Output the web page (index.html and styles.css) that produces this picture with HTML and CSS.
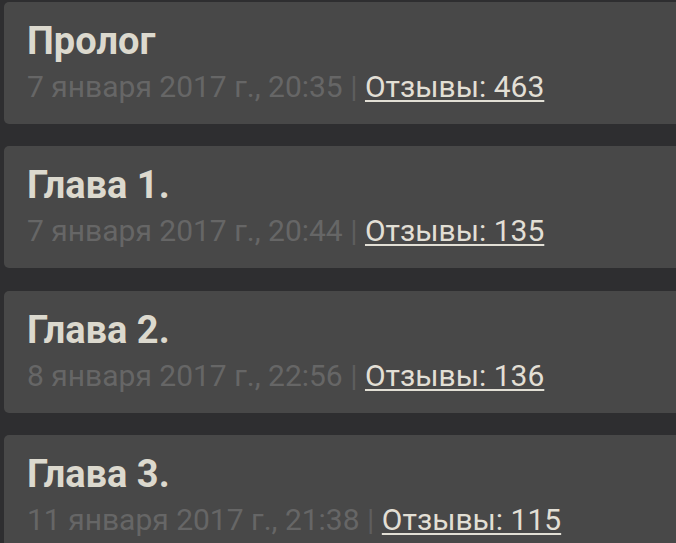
FILE: index.html
```html
<!DOCTYPE html>
<html lang="ru">
<head>
    <meta charset="UTF-8">
    <meta name="viewport" content="width=device-width, initial-scale=1.0">
    <title>Оглавление</title>
    <link rel="stylesheet" href="styles.css">
</head>
<body>
    <div class="chapters">
        <div class="chapter">
            <h2>Пролог</h2>
            <p class="meta">7 января 2017 г., 20:35 <span class="sep">|</span> <a href="#">Отзывы: 463</a></p>
        </div>
        <div class="chapter">
            <h2>Глава 1.</h2>
            <p class="meta">7 января 2017 г., 20:44 <span class="sep">|</span> <a href="#">Отзывы: 135</a></p>
        </div>
        <div class="chapter">
            <h2>Глава 2.</h2>
            <p class="meta">8 января 2017 г., 22:56 <span class="sep">|</span> <a href="#">Отзывы: 136</a></p>
        </div>
        <div class="chapter">
            <h2>Глава 3.</h2>
            <p class="meta">11 января 2017 г., 21:38 <span class="sep">|</span> <a href="#">Отзывы: 115</a></p>
        </div>
    </div>
</body>
</html>
```

FILE: styles.css
```css
body {
    font-family: Roboto, 'Noto Sans', sans-serif;
    background: #2e2e30;
    margin: 0;
    overflow: hidden;
}

.chapters {
    display: flex;
    flex-direction: column;
    gap: 22.3px;
    padding: 2px 0 0 4px;
}

.chapter {
    background: #484848;
    border-radius: 5px 0 0 5px;
    height: 122px;
    box-sizing: border-box;
    padding: 17px 23px 0;
}

h2 {
    margin: 0;
    font-size: 38px;
    font-weight: bold;
    line-height: 44px;
    color: #dcd9ce;
}

.meta {
    margin: 6px 0 0;
    font-size: 30px;
    line-height: 36px;
    color: #666666;
}

.sep {
    color: #5e5e5e;
}

.meta a {
    color: #e2dfd5;
    text-decoration: underline;
    text-decoration-thickness: 2px;
    text-underline-offset: 3px;
}
```
